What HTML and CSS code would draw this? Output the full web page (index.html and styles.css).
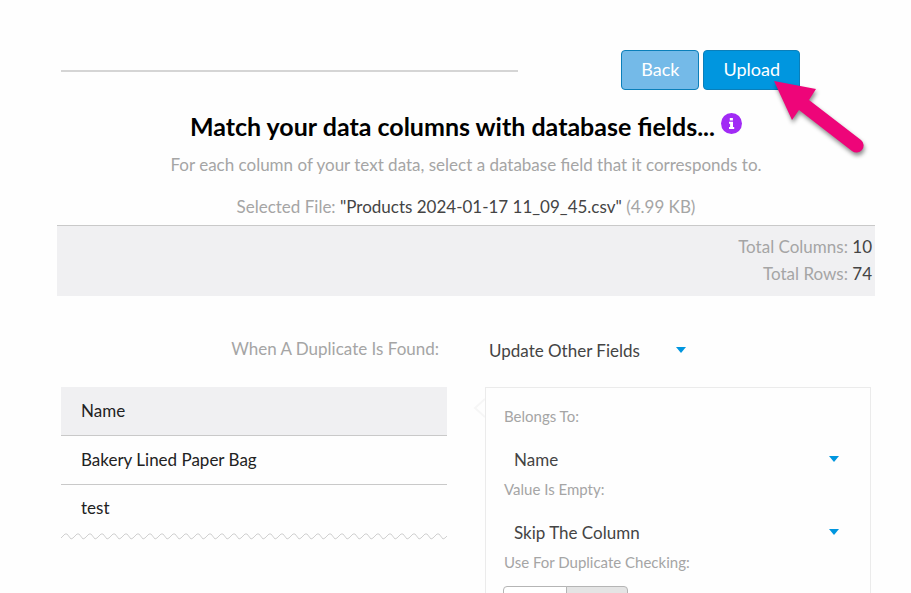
FILE: index.html
```
<!DOCTYPE html>
<html lang="en">
<head>
    <meta charset="UTF-8">
    <meta name="viewport" content="width=device-width, initial-scale=1.0">
    <title>Import - Match Columns</title>
    <link rel="stylesheet" href="styles.css">
</head>
<body>
    <main class="import-page">
        <div class="top-bar">
            <div class="step-line"></div>
            <div class="actions">
                <button type="button" class="btn btn-back">Back</button>
                <button type="button" class="btn btn-upload">Upload</button>
                <svg class="pointer" viewBox="0 0 100 84" aria-hidden="true">
                    <path d="M4 5 L46 13 L39 24 L91 64 A7 7 0 0 1 82 75 L29 34 L22 44 Z"/>
                </svg>
            </div>
        </div>

        <header class="intro">
            <h1>Match your data columns with database fields...
                <svg class="info-icon" viewBox="0 0 21 21" role="img" aria-label="Info">
                    <circle cx="10.5" cy="10.5" r="10.5" fill="#a12bf5"/>
                    <path fill="#fff" d="M8.8 4.9h3.1v2.6H8.8zM8 8.7h4v5.2h1.2v2H8v-2h1.1v-3.2H8z"/>
                </svg>
            </h1>
            <p class="hint">For each column of your text data, select a database field that it corresponds to.</p>
            <p class="file">Selected File: <span class="value">"Products 2024-01-17 11_09_45.csv"</span> (4.99 KB)</p>
        </header>

        <div class="totals">
            <div>Total Columns: <span class="value">10</span></div>
            <div>Total Rows: <span class="value">74</span></div>
        </div>

        <div class="duplicate-row">
            <label for="duplicate">When A Duplicate Is Found:</label>
            <div class="select select-inline">
                <select id="duplicate">
                    <option>Update Other Fields</option>
                </select>
            </div>
        </div>

        <div class="columns">
            <div class="preview">
                <table>
                    <thead>
                        <tr><th>Name</th></tr>
                    </thead>
                    <tbody>
                        <tr><td>Bakery Lined Paper Bag</td></tr>
                        <tr><td>test</td></tr>
                    </tbody>
                </table>
                <svg class="zigzag" aria-hidden="true">
                    <defs>
                        <pattern id="zig" width="12" height="8" patternUnits="userSpaceOnUse">
                            <path d="M-1 6 L0 5 L4 1 L6 1 L10 6 L12 5 L13 4" fill="none" stroke="#d0d0d0"/>
                        </pattern>
                    </defs>
                    <rect width="100%" height="8" fill="url(#zig)"/>
                </svg>
            </div>

            <form class="mapping">
                <svg class="notch" viewBox="0 0 12 20" aria-hidden="true">
                    <path d="M12 1 L2 10 L12 19" fill="none" stroke="#f6f6f6" stroke-width="2"/>
                </svg>
                <label for="belongs">Belongs To:</label>
                <div class="select">
                    <select id="belongs">
                        <option>Name</option>
                    </select>
                </div>
                <label for="empty">Value Is Empty:</label>
                <div class="select">
                    <select id="empty">
                        <option>Skip The Column</option>
                    </select>
                </div>
                <label id="check-label">Use For Duplicate Checking:</label>
                <div class="toggle" role="group" aria-labelledby="check-label">
                    <button type="button" class="toggle-btn" aria-label="Yes"></button>
                    <button type="button" class="toggle-btn active" aria-label="No"></button>
                </div>
            </form>
        </div>
    </main>
</body>
</html>
```
FILE: styles.css
```
* {
    box-sizing: border-box;
}

body {
    margin: 0;
    height: 100vh;
    overflow: hidden;
    background: #fefefe;
    color: #a5a5a5;
    font-family: Lato, sans-serif;
    font-size: 17px;
    line-height: 27px;
}

.import-page {
    padding: 50px 36px 0 57px;
}

.top-bar {
    display: flex;
    align-items: center;
    gap: 103px;
    padding: 0 75px 0 4px;
}

.step-line {
    flex: 1;
    height: 2px;
    margin-top: 2px;
    background: #d5d5d5;
}

.actions {
    position: relative;
    display: flex;
    gap: 4px;
}

.btn {
    height: 40px;
    padding: 0 19px 2px;
    border: 1px solid #0a7fba;
    border-radius: 4px;
    color: #fff;
    font: inherit;
    font-size: 18px;
}

.btn-back {
    background: #74bae8;
}

.btn-upload {
    background: #0096df;
}

/* arrow lies over the Upload button and the space below it */
.pointer {
    position: absolute;
    top: 26px;
    right: -70px;
    width: 100px;
    height: 84px;
    fill: #ee0579;
    filter: drop-shadow(1px 3px 2px rgba(0, 0, 0, 0.45));
    pointer-events: none;
}

.intro {
    padding-top: 20px;
    text-align: center;
}

h1 {
    margin: 0;
    color: #000;
    font-size: 25px;
    font-weight: 700;
    line-height: 32px;
}

.info-icon {
    width: 21px;
    height: 21px;
    vertical-align: 2px;
}

.hint {
    margin: 9px 0 0;
}

.file {
    margin: 15px 0 0;
}

.value {
    color: #444;
}

.totals {
    margin-top: 5px;
    padding: 7px 3px 9px;
    border-top: 1px solid #c9c9c9;
    background: #f0f0f2;
    text-align: right;
}

.duplicate-row {
    display: grid;
    grid-template-columns: 1fr 1fr;
    gap: 38px;
    padding: 35px 4px 0;
    align-items: center;
}

.duplicate-row label {
    padding: 0 8px 4px 0;
    text-align: right;
}

.select {
    position: relative;
    padding: 0 30px 0 10px;
}

.select::after {
    content: "";
    position: absolute;
    right: 13px;
    top: 16px;
    border: 5px solid transparent;
    border-top: 6px solid #0096df;
    border-bottom: 0;
    pointer-events: none;
}

.select select {
    width: 100%;
    height: 38px;
    padding: 0;
    border: 0;
    appearance: none;
    background: transparent;
    color: #444;
    font: inherit;
}

.select-inline {
    justify-self: start;
    width: 214px;
    padding-left: 4px;
}

.columns {
    display: grid;
    grid-template-columns: 1fr 1fr;
    gap: 38px;
    padding: 18px 4px 0;
}

table {
    width: 100%;
    border-collapse: collapse;
    color: #222;
}

th,
td {
    height: 49px;
    padding: 0 20px;
    border-bottom: 1px solid #c9c9c9;
    font-weight: 400;
    text-align: left;
}

th {
    height: 48px;
    background: #f0f0f2;
}

tbody tr:last-child td {
    height: 48px;
    padding-bottom: 2px;
    border-bottom: 0;
}

.zigzag {
    display: block;
    width: 100%;
    height: 8px;
    margin-top: 1px;
}

.mapping {
    position: relative;
    height: 260px;
    padding: 15px 18px;
    border: 1px solid #ebebeb;
}

.mapping label {
    display: block;
    font-size: 15px;
}

.mapping .select {
    margin: 10px 0 -2px;
}

.notch {
    position: absolute;
    top: 10px;
    left: -13px;
    width: 12px;
    height: 20px;
}

.toggle {
    display: flex;
    margin-top: 10px;
    margin-left: -1px;
}

.toggle-btn {
    width: 64px;
    height: 36px;
    border: 1px solid #b5b5b5;
    border-radius: 4px 0 0 4px;
    background: #fff;
}

.toggle-btn.active {
    width: 62px;
    margin-left: -1px;
    border-radius: 0 4px 4px 0;
    background: #e4e4e4;
}
```
